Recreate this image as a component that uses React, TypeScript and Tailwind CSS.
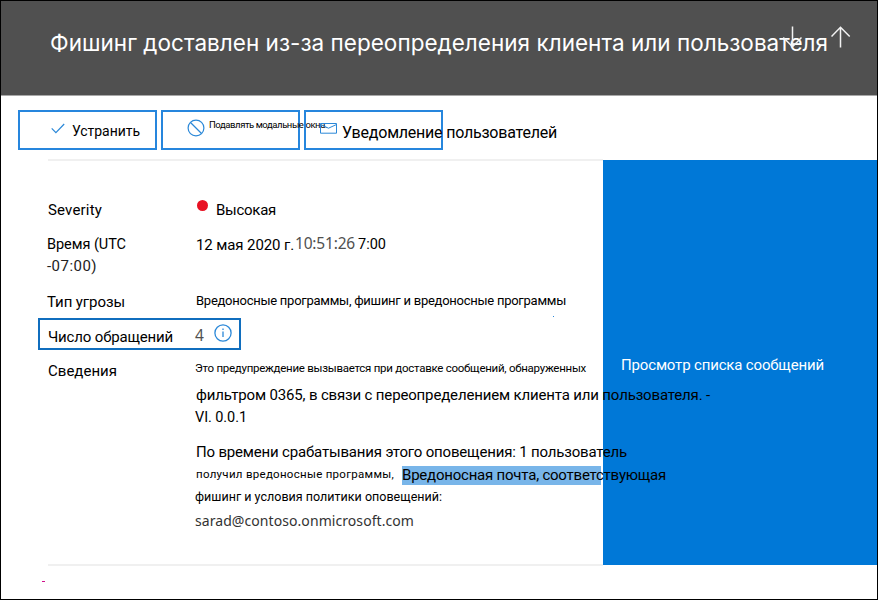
import { useLayoutEffect, useRef, useState } from "react";
import clsx from "clsx";

/** One line of text whose tracking is adjusted so that it fills the given width. */
function Line({ w, className, children }: { w: number; className?: string; children: string }) {
  const ref = useRef<HTMLSpanElement>(null);
  const [tracking, setTracking] = useState(0);
  useLayoutEffect(() => {
    if (!ref.current) return;
    const natural = ref.current.getBoundingClientRect().width;
    setTracking((w - natural) / children.length);
  }, [w, children]);
  return (
    <span ref={ref} className={clsx("block w-max shrink-0 whitespace-pre", className)} style={{ letterSpacing: tracking }}>
      {children}
    </span>
  );
}

function Arrow({ up }: { up?: boolean }) {
  return (
    <svg width="20" height="22" viewBox="0 0 20 22" fill="none" stroke="#f2f2f2" strokeWidth="1.5" className={up ? "" : "rotate-180"}>
      <path d="M9.500 21.500V1.200M.5 10.500L9.500 1.200l9.200 9.300" />
    </svg>
  );
}

const button = "flex h-[40px] w-[139px] border-2 border-[#2686dd]";

export default function App() {
  return (
    <div className="flex h-[600px] w-[878px] flex-col overflow-hidden border border-black bg-white font-['Roboto','Liberation_Sans',sans-serif] text-[15px] leading-[20px] text-black">
      <header className="relative flex h-[95px] shrink-0 border-b border-[#a8a8a8] bg-[#505050] pl-[49px] pt-[27px] text-white">
        <Line w={778} className="font-['Inter'] text-[22.5px] leading-[30px]">Фишинг доставлен из-за переопределения клиента или пользователя</Line>
        <div className="absolute left-[781px] top-[25px] flex gap-[29px]">
          <Arrow />
          <Arrow up />
        </div>
      </header>

      <div className="flex h-[63px] shrink-0 gap-[4px] pl-[17px] pt-[14px]">
        <div className={button}>
          <svg width="14" height="11" viewBox="0 0 14 11" fill="none" stroke="#2b88d8" strokeWidth="1.2" className="ml-[31px] mt-[11px]">
            <path d="M.7 5.3l4.2 4.3L13.2 1" />
          </svg>
          <Line w={68} className="ml-[7px] mt-[9px] text-[14px]">Устранить</Line>
        </div>
        <div className={button}>
          <svg width="18" height="18" viewBox="0 0 18 18" fill="none" stroke="#2b88d8" strokeWidth="1.2" className="ml-[24px] mt-[7px] shrink-0">
            <circle cx="9" cy="9" r="7.9" />
            <path d="M3.5 3.5l11 11" />
          </svg>
          <Line w={118} className="ml-[4px] mt-[3px] text-[9.5px]">Подавлять модальные окна.</Line>
        </div>
        <div className={button}>
          <svg width="17" height="11" viewBox="0 0 17 11" fill="none" stroke="#2b88d8" strokeWidth="1" className="ml-[14px] mt-[11px] shrink-0">
            <path d="M.5.5h16v9.700H.5zM.5 1.500l8 3.700 8-3.700" />
          </svg>
          <Line w={215} className="ml-[5px] mt-[11px] text-[16px]">Уведомление пользователей</Line>
        </div>
      </div>

      <div className="flex h-[407px] shrink-0">
        <main className="z-10 ml-[47px] w-[555px] border-y-2 border-[#f0f0f0] pt-[39px]">
          <div className="flex h-[34px]">
            <Line w={54}>Severity</Line>
            <span className="ml-[95px] size-[11px] shrink-0 rounded-full bg-[#e81123]" />
            <Line w={60} className="ml-[8px]">Высокая</Line>
          </div>
          <div className="flex h-[58px] pt-[1px]">
            <div className="-ml-[1px] w-[149px]">
              <Line w={79} className="text-[14.5px]">Время (UTC</Line>
              <Line w={50} className="mt-[1px] text-[#222]">-07:00)</Line>
            </div>
            <Line w={98}>12 мая 2020 г.</Line>
            <Line w={60} className="ml-[1px] -mt-[2px] font-['Noto_Sans'] text-[15.5px] text-[#505050]">10:51:26</Line>
            <Line w={28} className="ml-[3px] text-[14.5px]">7:00</Line>
          </div>
          <div className="flex h-[26px]">
            <Line w={78} className="-ml-[1px]">Тип угрозы</Line>
            <Line w={370} className="ml-[71px] -mt-[1px] text-[13px]">Вредоносные программы, фишинг и вредоносные программы</Line>
            <span className="-ml-[13px] mt-[24px] size-px bg-[#2b88d8]" />
          </div>
          <div className="-ml-[10px] flex h-[32px] w-[203px] border-2 border-[#106ebe] pl-[8px] pt-[7px]">
            <Line w={125}>Число обращений</Line>
            <Line w={9} className="-mt-[2px] ml-[22px] font-['Noto_Sans'] text-[15.5px] text-[#505050]">4</Line>
            <svg width="18" height="18" viewBox="0 0 18 18" fill="none" stroke="#2b88d8" strokeWidth="1.3" className="-mt-[3px] ml-[10px]">
              <circle cx="9" cy="9" r="8.100" />
              <path d="M9 7.500v5.500M9 4.500v1.500" />
            </svg>
          </div>
          <div className="flex pt-[11px]">
            <Line w={69}>Сведения</Line>
            <div className="ml-[79px] w-[407px]">
              <Line w={391} className="-ml-[1px] -mt-[3px] text-[11.500px]">Это предупреждение вызывается при доставке сообщений, обнаруженных</Line>
              <Line w={514} className="mt-[7px]">фильтром 0365, в связи с переопределением клиента или пользователя. -</Line>
              <Line w={52} className="-ml-[1px] mt-[3px] text-[14.500px]">VI. 0.0.1</Line>
              <Line w={431} className="mt-[14px]">По времени срабатывания этого оповещения: 1 пользователь</Line>
              <div className="flex h-[24px] pt-[4px]">
                <Line w={198} className="-mt-[2px] text-[11.500px]">получил вредоносные программы,</Line>
                <div className="ml-[8px] h-[19px] w-[199px] bg-[#78b5e9]">
                  <Line w={264} className="-mt-[1px]">Вредоносная почта, соответствующая</Line>
                </div>
              </div>
              <Line w={247} className="-ml-[1px] mt-[1px] text-[12.500px]">фишинг и условия политики оповещений:</Line>
              <Line w={219} className="-ml-[1px] mt-[4px] font-['Noto_Sans'] text-[14px] text-[#333]">sarad@contoso.onmicrosoft.com</Line>
            </div>
          </div>
        </main>
        <aside className="mt-[1px] flex h-[405px] w-[274px] bg-[#0078d7] pl-[18px] pt-[195px] text-white">
          <Line w={203}>Просмотр списка сообщений</Line>
        </aside>
      </div>
      <span className="ml-[41px] mt-[15px] h-px w-[3px] bg-[#d0108a]" />
    </div>
  );
}
